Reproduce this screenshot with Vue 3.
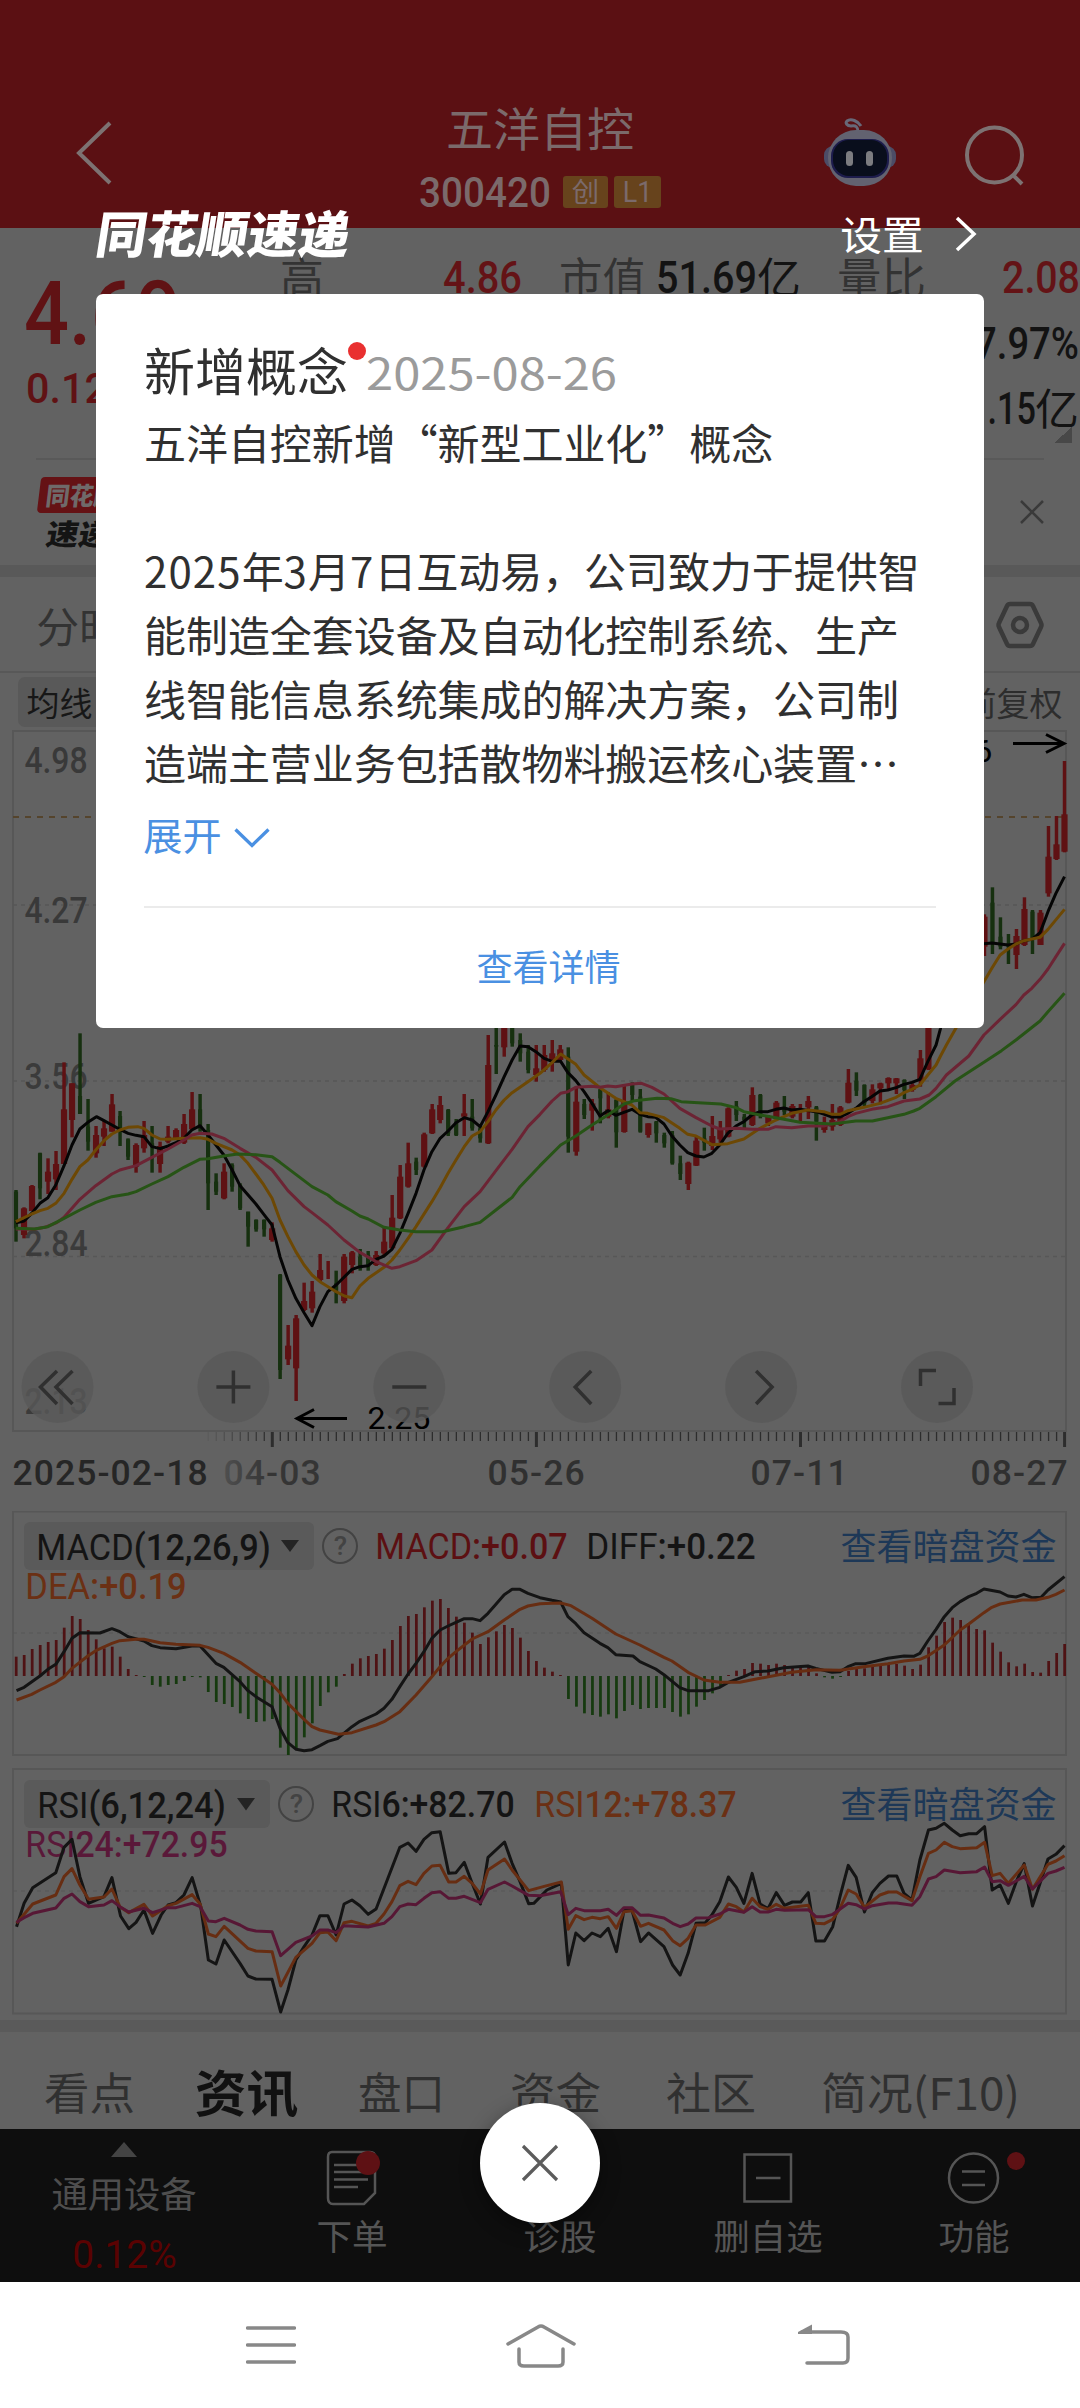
<script setup>
import { h } from 'vue'

const SANS = '"Noto Sans CJK SC", sans-serif'
const DIGITS = 'Roboto, "Noto Sans CJK SC", sans-serif'

// SVG text whose ink spans exactly w pixels from x, standing on baseline y
const Label = (p) => {
  const pad = p.size * 0.045
  const parts = p.cjk ? [p.t] : p.t.split(/([A-Za-z]+)/).filter(Boolean)
  return h(
    'text',
    {
      x: p.x - pad,
      y: p.y,
      textLength: p.w + pad * 2,
      lengthAdjust: p.spaced ? 'spacing' : 'spacingAndGlyphs',
      'font-size': p.size,
      'font-family': p.cjk ? SANS : DIGITS,
      'font-weight': p.weight || (p.cjk ? 400 : 500),
      fill: p.fill || 'currentColor'
    },
    parts.map((s) => h('tspan', { 'font-weight': /^[A-Za-z]/.test(s) && !p.cjk ? 400 : undefined }, s))
  )
}
Label.props = { x: Number, y: Number, w: Number, size: Number, t: String, cjk: Boolean, spaced: Boolean, weight: Number, fill: String }

// Inline box around one Label, as tall as the ink of its glyphs
const Fit = (p) => {
  const height = p.size * (p.cjk ? 0.92 : 0.71)
  return h(
    'svg',
    { width: p.w, height, style: { display: 'block', flex: 'none', overflow: 'visible' } },
    [h(Label, { x: 0, y: p.cjk ? p.size * 0.845 : height, w: p.w, size: p.size, t: p.t, cjk: p.cjk, weight: p.weight })]
  )
}
Fit.props = { w: Number, size: Number, t: String, cjk: Boolean, weight: Number }

const STEP = 23.24
const cx = (i) => 46.5 + STEP * i

// up/down, high, low, body top, body bottom
const bars = `g510,665,515,625 r562,655,565,645 r495,573,498,573 g398,538,400,505 r415,522,455,485 r393,510,432,478 r127,432,268,432 r190,352,190,300 g40,282,228,282 g237,392,320,365
r318,413,345,400 r300,378,325,350 r222,335,253,335 g273,378,288,335 g355,420,358,410 r370,458,375,440 r303,398,345,385 g318,458,370,380 r365,458,378,432 r318,370,350,365
r325,360,330,355 r282,372,312,368 r216,330,268,328 g222,335,268,325 g312,570,330,490 g460,525,485,515 r430,538,455,535 g430,515,435,500 g490,570,495,565 g575,680,575,620
g598,635,600,628 g598,650,600,628 r607,665,625,660 g762,1077,765,1050 r915,1035,977,1018 r885,1143,895,1045 r788,873,843,870 r783,878,815,865 r702,785,750,780 r723,777,777,777
g752,850,790,812 r702,850,710,843 r693,760,697,735 g687,752,710,745 g693,752,705,740 r693,738,705,735 r620,708,665,700 r525,688,593,685 r435,597,470,595 r368,503,430,500
g413,465,425,450 r338,443,343,440 r252,342,268,340 r228,310,255,300 g267,348,270,340 g297,348,305,345 r222,348,280,290 g237,332,290,325 g318,368,325,355 r45,372,135,370
g-20,162,75,80 r-40,110,-40,82 g-60,80,-60,70 g40,125,60,100 g75,160,95,150 r75,185,145,165 r75,155,105,150 r60,155,100,120 r75,125,88,120 g82,398,110,350
r200,407,245,395 g237,297,252,285 r237,332,250,272 g207,310,208,235 r217,295,268,290 g237,383,240,337 r193,338,245,336 g187,243,195,225 g207,338,230,335 r310,353,310,345
g303,368,305,340 g338,383,345,370 g333,434,345,430 g407,480,430,462 r425,510,428,492 r348,438,362,437 g323,392,355,368 r288,390,348,378 r303,368,325,358 r262,352,265,350
g243,303,258,285 g282,330,290,300 r202,318,225,315 g222,295,225,285 r285,318,290,310 r243,298,248,297 g228,285,262,275 r252,295,258,290 r252,303,303,303 r228,297,243,262
g258,362,262,305 r290,338,315,330 r252,332,300,320 r258,318,262,315 r147,250,188,248 g157,228,182,212 g193,258,195,250 r193,250,208,243 r188,253,190,205 r172,208,174,190
r174,222,175,190 g178,237,180,210 r190,215,195,210 r90,200,115,180 r-120,150,-20,148 r-200,-60,-180,-70 r-260,-150,-250,-160 r-300,-190,-290,-200 g-310,-200,-300,-230 r-320,-200,-300,-220
g-330,-200,-300,-220 r-317,-192,-310,-220 g-398,-198,-352,-230 g-308,-212,-250,-220 g-258,-168,-230,-220 r-273,-153,-252,-195 r-368,-222,-333,-225 g-330,-198,-325,-240 r-330,-225,-322,-225 r-582,-370,-490,-380
r-612,-480,-527,-483 r-777,-503,-617,-505`
  .split(/\s+/)
  .map((s, i) => {
    const [hi, lo, top, bottom] = s.slice(1).split(',').map(Number)
    return { x: cx(i), up: s[0] === 'r', hi, lo, top, bottom }
  })

const averages = [
  { color: '#050505', pts: '46,608 70,603 92,580 116,550 139,533 162,495 186,437 209,375 232,327 255,307 280,290 302,302 325,315 348,328 372,340 395,346 418,350 441,380 465,386 488,378 511,368 534,355 557,330 581,317 604,345 650,405 674,450 697,497 743,552 766,583 790,615 813,710 836,780 859,835 883,878 906,917 929,860 952,815 976,795 1022,748 1045,740 1069,737 1092,718 1115,708 1138,688 1161,640 1185,580 1208,520 1231,450 1254,395 1278,355 1301,333 1324,308 1348,293 1371,300 1394,320 1417,275 1440,225 1464,170 1487,120 1510,78 1533,80 1556,95 1580,115 1603,124 1628,124 1649,158 1672,182 1696,215 1719,250 1742,288 1765,272 1788,286 1835,268 1858,283 1881,290 1904,292 1928,312 1951,348 1974,375 1997,398 2021,408 2044,411 2067,400 2090,375 2113,340 2137,318 2160,305 2183,285 2207,275 2230,275 2253,268 2276,264 2299,270 2323,268 2369,275 2392,282 2416,291 2439,291 2462,280 2485,265 2508,245 2531,230 2555,213 2578,210 2602,203 2625,193 2648,187 2671,178 2683,150 2694,125 2706,100 2718,75 2731,25 2750,-80 2790,-200 2857,-229 2880,-231 2904,-228 2927,-225 2950,-228 2973,-238 2996,-242 3020,-262 3043,-325 3066,-380 3091,-430' },
  { color: '#6d4804', pts: '46,605 92,582 116,572 139,565 162,550 186,520 209,478 232,440 255,420 278,390 302,362 325,342 348,330 372,322 400,320 418,325 441,345 465,357 488,358 534,355 581,353 604,358 627,370 674,390 697,405 720,430 743,462 766,495 790,535 813,600 836,650 859,695 883,735 906,765 929,785 976,815 1000,828 1022,833 1045,798 1069,775 1115,742 1138,720 1161,690 1185,655 1208,620 1254,545 1278,503 1301,460 1324,420 1348,380 1371,348 1394,335 1417,305 1440,270 1464,240 1487,218 1533,185 1568,160 1603,128 1628,102 1672,133 1696,165 1742,203 1788,235 1835,255 1858,278 1881,280 1928,293 1974,325 1997,343 2021,348 2067,374 2113,371 2160,357 2207,325 2253,300 2299,280 2346,270 2392,275 2416,283 2439,283 2462,272 2508,262 2555,250 2602,232 2625,218 2648,208 2671,195 2694,165 2718,135 2731,108 2748,75 2778,20 2857,-115 2880,-155 2904,-195 2927,-213 2950,-228 2973,-238 3020,-248 3043,-272 3091,-332' },
  { color: '#6c2434', pts: '46,627 100,628 130,622 165,608 186,592 209,565 232,538 278,497 325,462 348,450 395,437 441,412 488,387 534,360 557,345 581,340 615,342 650,355 697,385 743,412 790,450 836,512 883,560 906,578 952,615 999,660 1045,697 1092,725 1138,745 1161,740 1208,722 1254,690 1301,623 1348,560 1394,515 1440,452 1487,388 1533,320 1568,283 1603,243 1628,220 1649,215 1672,202 1719,199 1742,202 1765,198 1788,200 1835,192 1863,190 1893,202 1928,222 1974,265 2021,293 2067,318 2090,327 2137,325 2183,328 2230,328 2253,320 2299,323 2346,318 2392,318 2439,305 2462,290 2485,280 2531,268 2578,260 2625,243 2671,237 2698,225 2718,205 2748,165 2813,108 2857,45 2904,-2 2950,-46 2973,-75 2996,-95 3020,-122 3043,-153 3066,-190 3091,-230' },
  { color: '#275416', pts: '46,625 100,627 139,620 186,595 232,570 278,547 325,530 372,522 395,515 441,492 488,470 534,442 580,418 604,416 650,408 690,402 743,404 790,410 813,427 859,463 906,500 952,525 975,545 1022,573 1045,588 1069,597 1115,622 1161,630 1208,635 1285,635 1348,620 1394,607 1440,570 1487,532 1510,500 1568,437 1628,375 1672,348 1719,315 1765,285 1812,252 1843,242 1908,235 1948,236 1978,245 2028,248 2093,252 2137,263 2160,275 2207,285 2253,293 2323,307 2416,312 2485,303 2533,303 2578,293 2625,283 2653,273 2671,265 2718,230 2773,183 2857,127 2908,92 2950,60 3020,3 3043,-25 3091,-80' }
]

const ZERO = 528
const macdBars = [
  470, 465, 447, 435, 426, 420, 383, 348, 357, 390, 418, 445, 440, 470, 507, 525, 531, 555, 560, 555, 552, 543, 531, 532,
  576, 606, 612, 621, 640, 657, 666, 664, 657, 743, 765, 750, 712, 670, 618, 577, 560, 522, 491, 475, 468, 462, 446, 420,
  378, 348, 342, 322, 302, 297, 324, 350, 368, 398, 432, 412, 394, 375, 384, 413, 453, 483, 503, 515, 525, 597, 620, 640,
  645, 650, 643, 655, 633, 615, 627, 624, 624, 624, 636, 650, 643, 620, 600, 580, 558, 525, 512, 507, 489, 491, 495, 491,
  495, 498, 500, 500, 520, 532, 536, 531, 513, 507, 505, 500, 498, 494, 492, 497, 507, 494, 442, 407, 366, 353, 360, 370,
  387, 391, 428, 455, 487, 499, 491, 516, 518, 483, 459, 432
].map((v, i) => ({ x: cx(i), y: Math.min(v, ZERO), h: Math.abs(v - ZERO), up: v < ZERO }))

const macdLines = [
  { color: '#141414', pts: '48,572 70,562 116,528 139,508 162,493 186,455 209,415 232,398 290,399 325,386 348,395 372,410 418,423 441,437 465,443 511,446 557,438 581,438 627,490 650,502 697,545 720,572 743,590 790,620 813,685 836,728 860,748 883,752 906,749 929,737 952,724 980,716 1022,680 1045,664 1092,642 1115,625 1138,598 1161,560 1185,522 1208,490 1231,455 1254,415 1278,390 1301,378 1324,367 1348,356 1371,356 1394,362 1417,340 1440,313 1464,284 1487,268 1510,268 1533,280 1568,293 1603,301 1628,306 1649,350 1672,371 1696,398 1742,430 1765,443 1788,464 1838,468 1858,485 1904,507 1928,524 1974,563 1998,572 2058,572 2090,562 2113,548 2160,530 2193,515 2230,513 2276,503 2346,498 2369,505 2416,517 2439,515 2462,500 2485,491 2513,491 2578,475 2625,468 2653,469 2671,460 2694,423 2718,388 2742,350 2765,323 2788,305 2813,290 2836,280 2857,267 2904,276 2927,288 2950,291 2973,283 2996,293 3023,292 3043,270 3091,230' },
  { color: '#672d12', pts: '48,600 92,583 116,570 162,547 186,530 209,505 255,468 278,452 325,430 348,422 395,418 418,418 465,428 511,433 581,436 604,442 650,460 697,487 743,520 790,553 813,578 836,610 883,658 906,680 929,690 983,703 1022,698 1092,675 1115,665 1161,635 1208,585 1254,530 1278,500 1301,475 1324,455 1371,417 1417,395 1464,360 1510,328 1533,318 1568,311 1603,310 1628,309 1658,317 1719,355 1788,402 1858,435 1928,472 1951,483 1998,517 2044,540 2090,547 2148,547 2207,535 2299,517 2369,509 2439,511 2508,500 2578,491 2625,483 2671,478 2694,468 2742,435 2788,390 2813,372 2857,338 2880,322 2904,312 2968,300 3008,300 3043,292 3066,283 3091,270' }
]

const rsiLines = [
  { color: '#141414', pts: '48,500 70,430 95,383 162,338 186,262 209,238 232,350 257,430 302,410 325,353 350,468 374,506 395,487 418,450 443,520 468,465 488,435 511,428 534,405 558,353 583,440 605,600 627,612 651,540 697,610 720,648 743,657 790,658 815,756 836,690 859,600 883,560 906,525 929,467 952,467 976,525 999,432 1022,420 1045,437 1069,463 1092,447 1161,262 1185,249 1208,274 1231,238 1254,218 1278,215 1303,340 1324,338 1348,307 1371,370 1395,432 1417,292 1465,246 1487,310 1510,365 1535,431 1550,430 1588,390 1630,370 1650,615 1672,519 1696,542 1719,519 1743,530 1766,505 1790,575 1812,450 1835,450 1860,545 1883,519 1928,560 1953,615 1975,645 1998,580 2021,490 2048,488 2067,465 2090,425 2115,351 2138,382 2160,430 2184,340 2207,432 2230,446 2254,398 2278,436 2301,426 2325,426 2347,398 2369,543 2394,543 2418,500 2439,410 2463,316 2486,352 2510,456 2533,398 2555,370 2580,348 2604,348 2625,400 2648,420 2671,300 2696,210 2718,205 2742,190 2765,210 2788,227 2813,221 2836,221 2859,200 2881,390 2904,375 2928,430 2951,365 2974,311 2998,438 3020,370 3043,297 3066,283 3091,257' },
  { color: '#672d12', pts: '48,490 95,432 162,405 186,350 209,326 232,375 257,418 302,411 325,387 348,440 374,458 418,433 443,468 488,437 511,430 558,404 581,432 605,522 627,530 651,499 720,565 743,573 790,575 815,678 859,592 906,550 929,518 952,516 976,542 999,488 1022,484 1069,498 1092,490 1115,462 1138,425 1161,377 1185,364 1208,374 1231,340 1254,318 1278,316 1303,366 1324,366 1348,349 1371,370 1395,402 1417,330 1465,297 1487,330 1535,392 1580,379 1630,366 1650,508 1672,467 1696,479 1719,472 1743,476 1766,470 1790,505 1812,455 1835,452 1860,499 1883,490 1928,510 1953,542 1975,557 1998,535 2021,495 2048,495 2090,472 2115,432 2138,440 2160,456 2184,415 2207,440 2230,448 2254,433 2278,445 2347,436 2369,490 2394,491 2418,478 2439,445 2463,390 2486,402 2510,442 2533,423 2555,405 2580,396 2604,396 2648,422 2671,350 2696,280 2718,270 2742,247 2765,260 2788,266 2836,263 2859,247 2881,347 2904,340 2928,370 2974,315 2998,388 3043,313 3066,303 3091,287' },
  { color: '#571735', pts: '48,487 70,473 95,460 162,444 186,415 209,402 232,425 257,440 302,435 325,422 348,440 374,456 418,445 443,458 488,443 511,443 558,430 581,440 605,483 627,485 651,475 697,495 720,508 743,513 790,515 815,587 859,547 906,528 929,510 952,510 976,518 999,497 1069,501 1115,490 1138,470 1161,440 1185,432 1208,434 1231,415 1254,398 1278,395 1303,415 1324,415 1348,409 1395,428 1417,388 1465,366 1487,378 1535,406 1568,407 1628,395 1650,464 1672,445 1696,452 1743,452 1766,448 1790,466 1812,443 1835,443 1860,466 1883,465 1928,474 1953,490 1975,500 1998,492 2021,474 2058,473 2090,462 2115,448 2160,457 2184,440 2207,456 2230,456 2254,448 2278,451 2347,449 2369,470 2394,470 2418,463 2463,430 2486,434 2510,447 2533,437 2580,429 2604,429 2648,436 2671,410 2696,357 2718,350 2742,330 2788,338 2836,335 2859,321 2881,365 2904,362 2928,376 2974,349 2998,387 3043,340 3066,333 3091,322' }
]

const ticks = Array.from({ length: 132 - 24 }, (_, k) => {
  const i = k + 24
  const major = (i - 32) % 33 === 0
  return { x: 16.2 + i * 8.003, major, o: Math.min(1, (i - 23) / 9) }
})

const scale = [
  { t: '4.98', y: 773, c: '#393939' },
  { t: '4.27', y: 923, c: '#393939' },
  { t: '3.56', y: 1089, c: '#3b3b3b' },
  { t: '2.84', y: 1256, c: '#3b3b3b' },
  { t: '2.13', y: 1414, c: '#3b3b3b' }
]
const tools = ['first', 'plus', 'minus', 'prev', 'next', 'full'].map((k, i) => ({ k, x: 57.5 + i * 175.9 }))
const toolPaths = {
  first: 'M-.5 -16 L-17 0 L-.5 17 M15 -16 L-1.500 0 L15 17',
  plus: 'M-17 0 H17 M0 -16.500 V16.500',
  minus: 'M-17 0 H17',
  prev: 'M6 -16 L-10 0 L6 17',
  next: 'M-5 -16 L11 0 L-5 17',
  full: 'M-16.500 -1 V-16.500 H-1 M17 1 V16.500 H1.500'
}
</script>

<template>
  <div class="screen" lang="zh-CN">
    <header class="topbar">
      <svg class="back" width="40" height="66" viewBox="0 0 40 66"><path d="M35 3 L4 33 L35 63" /></svg>
      <div class="heading">
        <Fit class="name" t="五洋自控" :w="184" :size="46" cjk />
        <div class="code">
          <Fit t="300420" :w="128" :size="42.500" />
          <span class="tag"><Fit t="创" :w="25" :size="27" cjk /></span>
          <span class="tag"><Fit t="L1" :w="27" :size="30" :weight="400" /></span>
        </div>
      </div>
      <svg class="robot" width="74" height="68" viewBox="0 0 74 68">
        <path d="M35 13 C35 8 33 6 28 7 C24 7 22 4 24 2 C28 -1 35 2 38 7" fill="none" stroke="#686878" stroke-width="3" />
        <rect x="1" y="27" width="72" height="22" rx="9" fill="#4c4c66" />
        <rect x="5" y="11" width="64" height="56" rx="28" fill="#626270" />
        <rect x="8" y="20" width="58" height="39" rx="17" fill="#1d1c4c" />
        <rect x="10" y="21" width="54" height="36" rx="16" fill="#090e1c" />
        <rect x="23" y="32" width="7" height="15" rx="3.500" fill="#7c7c80" />
        <rect x="43" y="32" width="7" height="15" rx="3.500" fill="#7c7c80" />
      </svg>
      <svg class="search" width="62" height="62" viewBox="0 0 62 62"><ellipse cx="30.500" cy="30" rx="27.500" ry="27.500" /><path d="M49 50 L58 59" /></svg>
    </header>

    <section class="quote">
      <div class="price">
        <Fit t="4.69" :w="149" :size="88.500" />
        <Fit class="change" t="0.12" :w="78" :size="43" />
      </div>
      <div class="stats">
        <div class="stat-row">
          <Fit class="muted" t="高" :w="40" :size="43" cjk />
          <Fit class="rise high" t="4.86" :w="75" :size="43.500" />
          <Fit class="muted cap" t="市值" :w="83" :size="43" cjk />
          <Fit class="cap-num" t="51.69" :w="97" :size="43.500" />
          <Fit class="unit" t="亿" :w="40" :size="43" cjk />
          <Fit class="muted ratio" t="量比" :w="85" :size="43" cjk />
          <Fit class="rise ratio-num" t="2.08" :w="74" :size="43.500" />
        </div>
        <Fit class="turnover" t="7.97%" :w="100" :size="43.500" />
        <div class="amount"><Fit t="1.15" :w="64" :size="43.500" /><Fit class="amount-unit" t="亿" :w="40" :size="43" cjk /></div>
        <i class="corner"></i>
      </div>
    </section>

    <section class="express">
      <div class="brand">
        <div class="brand-top"><Fit t="同花顺" :w="70" :size="25" cjk :weight="900" /></div>
        <Fit class="brand-bottom" t="速递" :w="62" :size="29" cjk :weight="900" />
      </div>
      <svg width="24" height="24" viewBox="0 0 24 24"><path d="M1 1 L23 23 M23 1 L1 23" fill="none" stroke="#3a3a3a" stroke-width="2.500" /></svg>
    </section>

    <nav class="periods">
      <Fit t="分时" :w="82" :size="42" cjk />
      <svg width="48" height="48" viewBox="0 0 48 48" fill="none" stroke="#3a3a3a" stroke-width="4.500" stroke-linejoin="round"><path d="M14 3 H34 Q36 3 37 5 L45 22 Q46 24 45 26 L37 43 Q36 45 34 45 H14 Q12 45 11 43 L3 26 Q2 24 3 22 L11 5 Q12 3 14 3 Z" /><circle cx="24" cy="24" r="7" /></svg>
    </nav>

    <div class="ma-row">
      <span class="ma-pill"><Fit t="均线" :w="63" :size="32.500" cjk /></span>
      <Fit class="adjust" t="前复权" :w="96" :size="32.500" cjk />
    </div>

    <svg class="chart" width="1080" height="781" viewBox="0 730 1080 781">
      <g fill="none" stroke="#575757" stroke-width="2">
        <rect x="13" y="731" width="1053" height="700" />
        <path d="M13 905 H1065 M13 1081 H1065 M13 1256.500 H1065" stroke-dasharray="4 4" stroke-width="1.300" />
        <path d="M13 817 H1065" stroke="#55442c" stroke-dasharray="6 6" />
      </g>
      <Label v-for="s in scale" :key="s.t" :x="26" :y="s.y" :w="60" :size="36" :t="s.t" :fill="s.c" />
      <g transform="translate(0 1020) scale(.34439 .33333)">
        <g v-for="(b, i) in bars" :key="i" :fill="b.up ? '#5f1113' : '#16300f'">
          <rect :x="b.x - 5" :y="b.hi" width="10" :height="b.lo - b.hi" />
          <rect :x="b.x - (b.up ? 9 : 6)" :y="b.top" :width="b.up ? 18 : 12" :height="b.bottom - b.top" />
        </g>
        <polyline v-for="m in averages" :key="m.color" class="curve" :points="m.pts" :stroke="m.color" />
      </g>
      <g fill="none" stroke="#000" stroke-width="3">
        <path d="M1013 743.500 H1064 M1046 734.500 L1064 743.500 L1046 752.500" />
        <path d="M347 1418.500 H297 M314 1409.500 L297 1418.500 L314 1427.500" />
      </g>
      <Label :x="929" :y="762" :w="62" :size="31" t="4.86" fill="#000" :weight="400" />
      <Label :x="369" :y="1429" :w="60" :size="31" t="2.25" fill="#000" :weight="400" />
      <g v-for="b in tools" :key="b.k" :transform="`translate(${b.x} 1387)`">
        <circle r="36" fill="#595959" fill-opacity=".8" />
        <path :d="toolPaths[b.k]" fill="none" stroke="#303030" stroke-width="3.500" />
      </g>
      <line v-for="t in ticks" :key="t.x" :x1="t.x" :x2="t.x" y1="1432" :y2="t.major ? 1447 : 1441" stroke="#2d2d2d" :stroke-width="t.major ? 3 : 1.300" :opacity="t.o" />
      <defs>
        <linearGradient id="fade" gradientUnits="userSpaceOnUse" x1="225" y1="0" x2="320" y2="0"><stop offset="0" stop-color="#4e4e4e" /><stop offset=".45" stop-color="#353535" /></linearGradient>
      </defs>
      <Label :x="14" :y="1485" :w="192" :size="35.500" t="2025-02-18" spaced fill="#262626" />
      <Label :x="225" :y="1485" :w="94" :size="35.500" t="04-03" spaced fill="url(#fade)" />
      <Label :x="489" :y="1485" :w="94" :size="35.500" t="05-26" spaced fill="#303030" />
      <Label :x="752" :y="1485" :w="94" :size="35.500" t="07-11" spaced fill="#303030" />
      <Label :x="972" :y="1485" :w="94" :size="35.500" t="08-27" spaced fill="#303030" />
    </svg>

    <svg class="chart" width="1080" height="257" viewBox="0 1511 1080 257">
      <rect x="13" y="1511.500" width="1053" height="243.500" fill="none" stroke="#575757" stroke-width="2" />
      <path d="M13 1633 H1065" stroke="#575757" stroke-dasharray="4 4" />
      <rect x="24" y="1522" width="290" height="48" rx="6" fill="#5a5a5a" />
      <Label :x="38" :y="1560" :w="231" :size="37.500" t="MACD(12,26,9)" fill="#141414" />
      <path d="M281 1540 H299 L290 1552 Z" fill="#242424" />
      <circle cx="340" cy="1546" r="17" fill="none" stroke="#434343" stroke-width="2" />
      <Label :x="335" :y="1555" :w="11" :size="26" t="?" fill="#434343" />
      <Label :x="377" :y="1559" :w="189" :size="37" t="MACD:+0.07" fill="#5c1012" />
      <Label :x="588" :y="1559" :w="166" :size="37" t="DIFF:+0.22" fill="#141414" />
      <Label :x="27" :y="1599" :w="158" :size="37" t="DEA:+0.19" fill="#6b3014" />
      <Label :x="842" :y="1559.500" :w="213" :size="36" t="查看暗盘资金" cjk fill="#1d3857" />
      <g transform="translate(0 1500) scale(.34439 .33333)">
        <rect v-for="(b, i) in macdBars" :key="i" :x="b.x - 3.500" :y="b.y" width="8" :height="b.h" :fill="b.up ? '#4f1214' : '#163a0f'" />
        <polyline v-for="m in macdLines" :key="m.color" class="curve" :points="m.pts" :stroke="m.color" />
      </g>
    </svg>

    <svg class="chart" width="1080" height="252" viewBox="0 1768 1080 252">
      <rect x="13" y="1769" width="1053" height="244.500" fill="none" stroke="#575757" stroke-width="2" />
      <path d="M13 1891 H1065" stroke="#575757" stroke-dasharray="4 4" />
      <rect x="24" y="1780" width="246" height="48" rx="6" fill="#5a5a5a" />
      <Label :x="39" :y="1818" :w="185" :size="37.500" t="RSI(6,12,24)" fill="#141414" />
      <path d="M237 1798 H255 L246 1810.500 Z" fill="#242424" />
      <circle cx="296" cy="1804" r="17" fill="none" stroke="#434343" stroke-width="2" />
      <Label :x="291" :y="1813" :w="11" :size="26" t="?" fill="#434343" />
      <Label :x="333" :y="1817" :w="180" :size="37" t="RSI6:+82.70" fill="#141414" />
      <Label :x="536" :y="1817" :w="199" :size="37" t="RSI12:+78.37" fill="#6b3014" />
      <Label :x="27" :y="1857" :w="199" :size="37" t="RSI24:+72.95" fill="#5a1839" />
      <Label :x="842" :y="1817.500" :w="213" :size="36" t="查看暗盘资金" cjk fill="#1d3857" />
      <g transform="translate(0 1760) scale(.34439 .33333)">
        <polyline v-for="m in rsiLines" :key="m.color" class="curve" :points="m.pts" :stroke="m.color" />
      </g>
    </svg>

    <nav class="tabs">
      <Fit t="看点" :w="87" :size="44" cjk />
      <Fit class="active" t="资讯" :w="99" :size="50" cjk :weight="700" />
      <Fit t="盘口" :w="83" :size="44" cjk />
      <Fit t="资金" :w="87" :size="44" cjk />
      <Fit t="社区" :w="86" :size="44" cjk />
      <Fit t="简况(F10)" :w="195" :size="44" cjk />
    </nav>

    <footer class="actions">
      <div class="action sector">
        <i class="caret"></i>
        <Fit class="sector-name" t="通用设备" :w="142" :size="36" cjk />
        <Fit class="sector-change" t="0.12%" :w="101" :size="38" :weight="400" />
      </div>
      <div class="action order">
        <svg width="64" height="60" viewBox="0 0 64 60"><g fill="none" stroke="#555" stroke-width="2.500"><path d="M12 5 Q8 5 8 10 V51 Q8 57 13 57 H44 L55 46 V10 Q55 5 50 5 Z" /><path d="M14 18 H48 M14 25 H48 M14 32.500 H48 M14 40 H38" /></g><circle cx="48" cy="16" r="12" fill="#5e1114" /></svg>
        <Fit t="下单" :w="68" :size="35.500" cjk />
      </div>
      <div class="action diagnose"><Fit t="诊股" :w="70" :size="35.500" cjk /></div>
      <div class="action remove">
        <svg width="64" height="60" viewBox="0 0 64 60"><path d="M8.500 7.500 H55 V54.500 H8.500 Z M20 31 H44.500" fill="none" stroke="#555" stroke-width="2.500" /></svg>
        <Fit t="删自选" :w="106" :size="35.500" cjk />
      </div>
      <div class="action more">
        <svg width="84" height="60" viewBox="0 0 84 60"><g fill="none" stroke="#555" stroke-width="2.500"><circle cx="41.500" cy="31" r="24.500" /><path d="M30 24.500 H53 M30 38 H53" /></g><circle cx="84" cy="14" r="9" fill="#5e1114" /></svg>
        <Fit t="功能" :w="68" :size="35.500" cjk />
      </div>
    </footer>

    <div class="system-nav">
      <svg width="50" height="44" viewBox="0 0 50 44"><path d="M1.500 5 H48.500 M1.500 22 H48.500 M1.500 39 H48.500" /></svg>
      <svg class="home" width="72" height="46" viewBox="0 0 72 46"><path d="M3 21 L33 4 Q36 2 39 4 L69 21 M14 26 V39 Q14 43 19 43 H53 Q58 43 58 39 V26" /></svg>
      <svg class="return" width="52" height="44" viewBox="0 0 52 44"><path d="M4 9 H43 Q50 9 50 14 V35 Q50 40 45 40 H9" /><path class="solid" d="M0 9 L14 1.500 V11 H0 Z" /></svg>
    </div>

    <div class="dialog">
      <div class="dialog-head">
        <Fit class="dialog-logo" t="同花顺速递" :w="249" :size="50" cjk :weight="900" />
        <div class="settings">
          <Fit t="设置" :w="80" :size="40" cjk />
          <svg width="22" height="36" viewBox="0 0 22 36"><path d="M2 2 L19 18 L2 34" fill="none" stroke="#fff" stroke-width="3.500" /></svg>
        </div>
      </div>
      <article class="card">
        <div class="card-title">
          <h2>新增概念</h2>
          <i class="dot"></i>
          <time><svg width="248" height="34"><text x="-2" y="33" textLength="251" lengthAdjust="spacingAndGlyphs">2025-08-26</text></svg></time>
        </div>
        <p>五洋自控新增“新型工业化”概念</p>
        <p class="body">
          <span><b>2025</b>年<b>3</b>月<b>7</b>日互动易，公司致力于提供智</span>
          <span>能制造全套设备及自动化控制系统、生产</span>
          <span>线智能信息系统集成的解决方案，公司制</span>
          <span>造端主营业务包括散物料搬运核心装置…</span>
        </p>
        <div class="expand">
          <Fit t="展开" :w="75" :size="38" cjk />
          <svg width="36" height="20" viewBox="0 0 36 20"><path d="M1.500 1.500 L18 17.500 L34.500 1.500" fill="none" stroke="#4a90e2" stroke-width="3.300" /></svg>
        </div>
        <div class="detail"><Fit t="查看详情" :w="141" :size="36" cjk /></div>
      </article>
      <button class="close" aria-label="关闭">
        <svg width="38" height="38" viewBox="0 0 38 38"><path d="M2 2 L36 36 M36 2 L2 36" fill="none" stroke="#5c5c5c" stroke-width="3.200" /></svg>
      </button>
    </div>
  </div>
</template>

<style>
body { margin: 0; }
</style>

<style scoped>
.screen {
  position: relative;
  width: 1080px;
  height: 2408px;
  overflow: hidden;
  display: flex;
  flex-direction: column;
  background: #626262;
  font-family: "Noto Sans CJK SC", sans-serif;
}
.screen > * { flex: none; box-sizing: border-box; }
.topbar {
  height: 228px;
  background: #5b1013;
  color: #7b6a6b;
  display: flex;
  align-items: flex-start;
}
.back { margin: 120px 0 0 75px; }
.back path, .search * { fill: none; stroke: #7d7272; stroke-width: 4; }
.heading { margin: 107px 0 0 306px; width: 240px; }
.name { margin-left: 27px; }
.code { display: flex; margin-top: 24px; align-items: flex-start; padding-top: 3.500px; height: 38px; }
.tag {
  width: 45px;
  height: 32px;
  margin-left: 14px;
  margin-top: -1px;
  border-radius: 3px;
  background: #67431c;
  display: flex;
  align-items: center;
  justify-content: center;
}
.tag + .tag { margin-left: 6px; width: 48px; }
.robot { margin: 119px 0 0 162px; overflow: visible; }
.search { margin: 125px 0 0 67px; }
.quote { height: 230px; display: flex; color: #131313; }
.price { width: 200px; padding: 53px 0 0 28px; color: #601214; }
.change { margin-top: 28px; }
.stats { flex: 1; position: relative; display: flex; flex-direction: column; align-items: flex-end; }
.stat-row { width: 880px; padding: 30px 0 0 82px; height: 100px; display: flex; align-items: flex-start; box-sizing: border-box; }
.muted { color: #333; }
.rise { color: #641316; }
.high, .cap-num, .ratio-num { margin-top: 4px; }
.high { margin-left: 123px; }
.cap { margin-left: 41px; }
.cap-num { margin-left: 14px; }
.unit { margin-left: 4px; }
.ratio { margin-left: 40px; }
.ratio-num { margin-left: 80px; }
.turnover { margin: 0 3px 0 0; }
.amount { display: flex; margin: 30px 3px 0 0; }
.amount > :first-child { margin-top: 4px; }
.amount-unit { margin-left: 3px; }
.corner { position: absolute; right: 8px; bottom: 15px; width: 18px; height: 16px; background: linear-gradient(to bottom right, transparent 50%, #484848 50%); }
.express {
  height: 107px;
  margin: 0 36px;
  border-top: 2px solid #595959;
  display: flex;
  justify-content: space-between;
  padding-top: 17px;
}
.express > svg { margin-top: 23px; }
.brand-top {
  width: 96px;
  height: 36px;
  margin-left: 3px;
  background: #651215;
  color: #6f6a6a;
  border-radius: 4px;
  transform: skewX(-7deg);
  padding: 7px 0 0 8px;
  box-sizing: border-box;
}
.brand-bottom { margin: 7px 0 0 12px; color: #141414; transform: skewX(-10deg); }
.periods {
  height: 108px;
  border-top: 12px solid #595959;
  border-bottom: 2px solid #585858;
  display: flex;
  justify-content: space-between;
  padding: 24px 36px 0 38px;
  color: #333;
}
.periods > :first-child { margin-top: 6px; }
.ma-row { height: 57px; display: flex; justify-content: space-between; color: #2d2d2d; }
.ma-pill { margin: 4px 0 0 18px; width: 160px; height: 50px; border-radius: 7px; background: #595959; color: #171717; padding: 12px 0 0 10px; box-sizing: border-box; }
.adjust { margin: 16px 19px 0 0; }
.chart { display: block; }
.curve { fill: none; stroke-width: 3; vector-effect: non-scaling-stroke; stroke-linejoin: round; }
.tabs {
  height: 109px;
  border-top: 12px solid #5a5a5a;
  display: flex;
  align-items: flex-start;
  justify-content: space-between;
  padding: 41px 62px 0 46px;
  color: #303030;
}
.active { color: #111; margin-top: -3px; margin-right: -5px; margin-left: -5px; }
.actions { height: 153px; background: #0e0e0e; color: #555; display: flex; }
.action { flex: none; width: 207px; display: flex; flex-direction: column; align-items: center; padding-top: 18px; box-sizing: border-box; }
.action > svg { overflow: visible; }
.action > svg + svg { margin-top: 13px; }
.action.sector { width: 248px; padding-top: 13px; }
.caret { border: solid transparent; border-width: 0 13px 15px; border-bottom-color: #444; }
.sector > .sector-name { margin-top: 21px; color: #4e4e4e; }
.sector > .sector-change { margin-top: 30px; color: #5a0202; }
.order { padding-left: 1px; }
.action.diagnose { padding-top: 91px; width: 209px; }
.more { width: 206px; }
.system-nav { height: 126px; background: #fff; display: flex; align-items: flex-start; padding: 41px 0 0 246px; }
.system-nav path { fill: none; stroke: #888; stroke-width: 3.500; stroke-linecap: round; }
.system-nav .solid { fill: #888; stroke: none; }
.home { margin-left: 209px; }
.return { margin-left: 221px; }
.dialog {
  position: absolute;
  top: 0;
  left: 96px;
  width: 888px;
  display: flex;
  flex-direction: column;
  align-items: stretch;
}
.dialog-head { height: 294px; display: flex; justify-content: space-between; align-items: flex-start; color: #fff; padding: 211px 7px 0 3px; box-sizing: border-box; }
.dialog-logo { transform: skewX(-9deg); }
.settings { display: flex; margin-top: 5px; gap: 33px; }
.card {
  height: 734px;
  border-radius: 7px;
  background: #fff;
  padding: 42px 48px 0;
  box-sizing: border-box;
  color: #303030;
}
.card-title { display: flex; height: 74px; }
.card-title h2 { margin: 0; font-size: 51px; font-weight: 400; line-height: 66px; letter-spacing: 0; }
.dot { width: 18px; height: 18px; border-radius: 50%; background: #e93030; margin: 6px 0 0 0; }
time { margin: 21px 0 0 2px; color: #9b9b9b; font-size: 44px; line-height: 0; }
time svg { overflow: visible; }
time text { fill: currentColor; }
.card p { margin: 0; font-size: 42px; line-height: 64px; letter-spacing: -0.06px; white-space: nowrap; height: 64px; }
.card .body { margin-top: 64px; height: 256px; }
.body span { display: block; }
.body b { font-weight: 400; letter-spacing: 1.100px; }
.expand { display: flex; align-items: center; height: 36px; margin: 23px 0 0 1px; color: #4a90e2; gap: 14px; }
.expand svg:last-child { margin-top: 5px; }
.detail { margin: 53px 0 0; border-top: 2px solid #ebebeb; padding: 43px 0 0 334px; color: #4a90e2; }
.close {
  align-self: center;
  margin-top: 1075px;
  width: 120px;
  height: 120px;
  border: 0;
  padding: 0;
  border-radius: 50%;
  background: #fff;
  box-shadow: 0 6px 20px rgba(0, 0, 0, .4);
  display: flex;
  align-items: center;
  justify-content: center;
}
</style>
